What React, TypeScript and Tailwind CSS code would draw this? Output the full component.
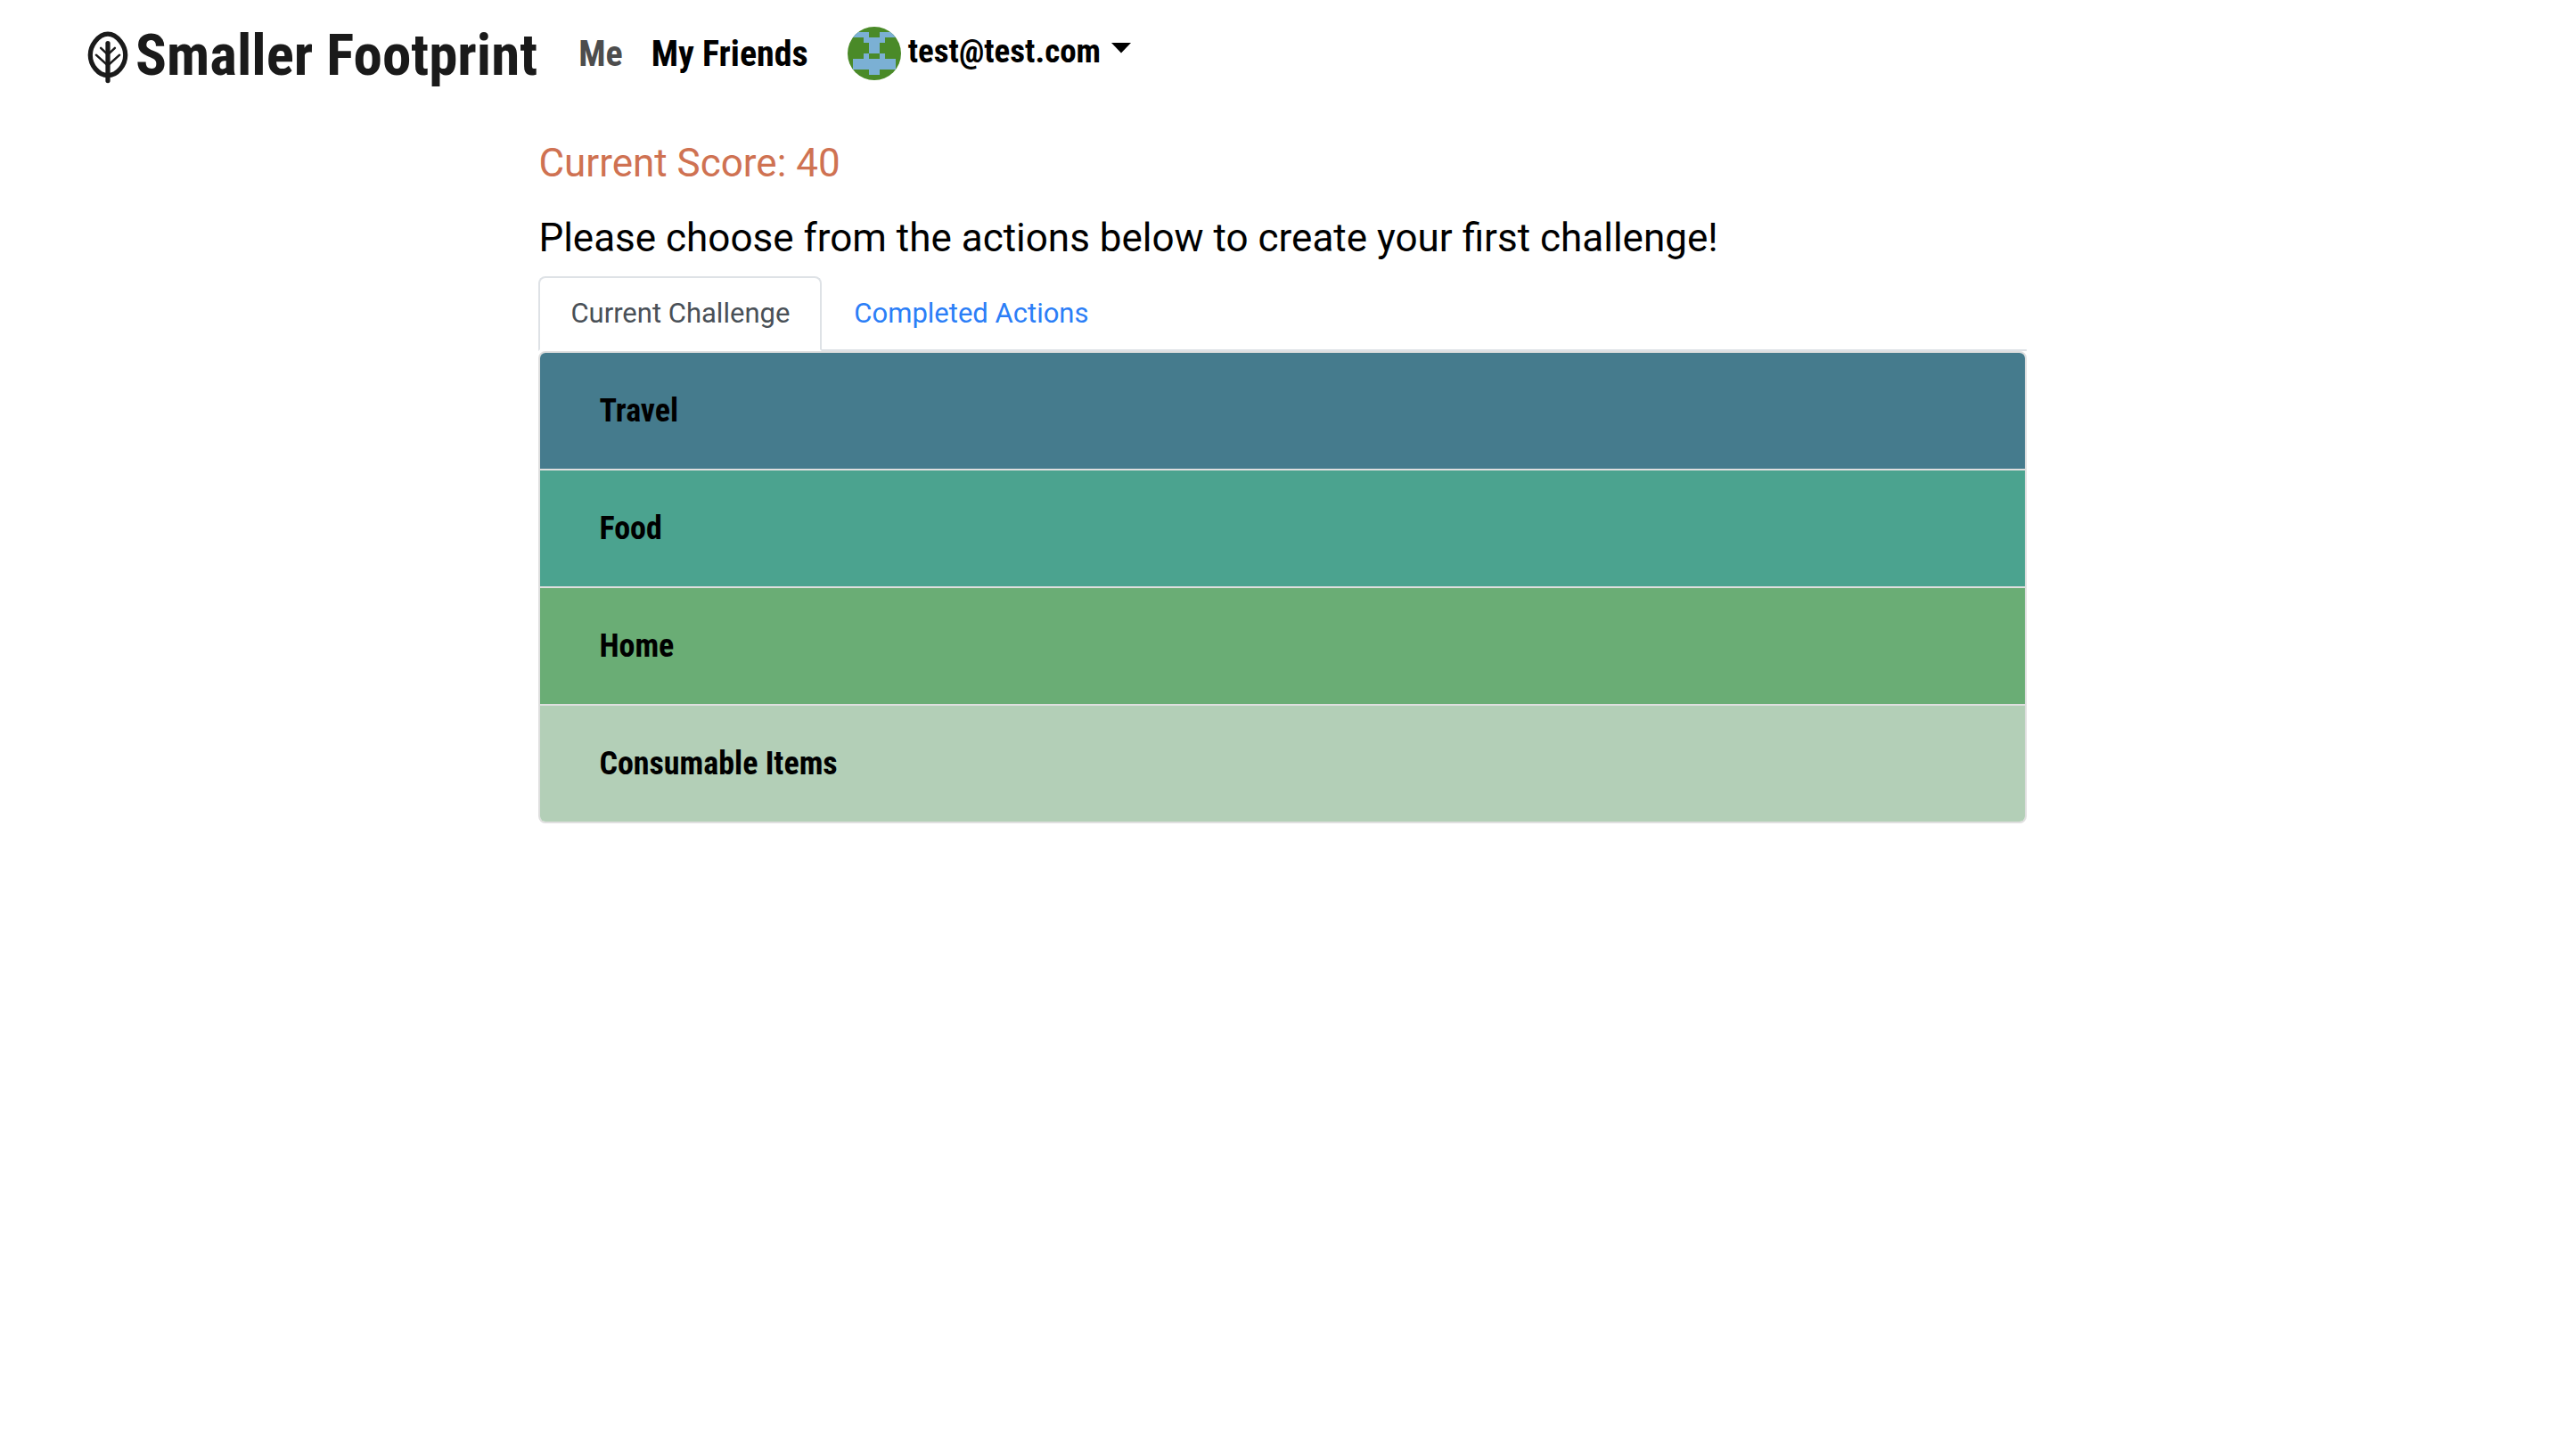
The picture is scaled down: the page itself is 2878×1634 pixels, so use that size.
const AVATAR_ROWS = [
  "..........",
  "####..####",
  "...####...",
  "....##....",
  "....##....",
  "...#..#...",
  ".########.",
  ".########.",
  "....##....",
  "..........",
];

const CATEGORIES = [
  { name: "Travel", color: "bg-[#457b8d]" },
  { name: "Food", color: "bg-[#4ba38f]" },
  { name: "Home", color: "bg-[#6aad75]" },
  { name: "Consumable Items", color: "bg-[#b3cfb7]" },
];

function LeafIcon() {
  return (
    <svg viewBox="52 46 140 182" className="h-[60px] w-[46px]" fill="none" stroke="currentColor" strokeLinecap="round" aria-hidden="true">
      <path strokeWidth="16" d="M122 58C138 58 154 69 165 83C176 97 182 113 182 130C182 165 154 200 122 200C90 200 62 165 62 130C62 113 68 97 79 83C90 69 106 58 122 58Z" />
      <path strokeWidth="16" d="M122 90V218" />
      <path strokeWidth="7.5" d="M98 106L122 129L146 106M82 130L122 166L162 130" />
    </svg>
  );
}

function Avatar() {
  return (
    <svg viewBox="0 0 10 10" className="size-[60px] rounded-full bg-[#4a8a28]" shapeRendering="crispEdges" aria-hidden="true">
      {AVATAR_ROWS.flatMap((row, y) =>
        [...row].map((cell, x) =>
          cell === "#" ? <rect key={`${x}-${y}`} x={x} y={y} width="1" height="1" fill="#7bb0d4" /> : null
        )
      )}
    </svg>
  );
}

export default function App() {
  return (
    <div className="min-h-screen bg-white font-['Roboto',sans-serif] text-black">
      <header className="flex h-[120px] items-center px-[98px] font-['Roboto_Condensed','Roboto',sans-serif] font-bold">
        <a href="#" className="flex items-center gap-2 pt-1 text-[65px] leading-[80px] text-[#1a1a1a]">
          <span className="pt-1">
            <LeafIcon />
          </span>
          Smaller Footprint
        </a>
        <nav className="ml-[30px] flex items-center text-[40px] leading-[60px]">
          <a href="#" className="px-4 pt-0.5 text-[#4d4d4d]">Me</a>
          <a href="#" className="px-4 pt-0.5">My Friends</a>
          <button type="button" className="ml-7 flex items-center gap-2">
            <Avatar />
            <span className="pb-1 text-[37px] leading-[54px]">test@test.com</span>
            <svg viewBox="0 0 22 12" className="mb-3 ml-1 h-3 w-[22px]" fill="currentColor" aria-hidden="true">
              <path d="M0 0H22L11 11.5Z" />
            </svg>
          </button>
        </nav>
      </header>

      <main className="mx-auto w-[58%] pt-9">
        <h2 className="text-[44px] leading-[54px] text-[#cf7252]">Current Score: 40</h2>
        <h1 className="mt-[30px] text-[44px] leading-[54px]">
          Please choose from the actions below to create your first challenge!
        </h1>

        <div role="tablist" className="mt-4 flex border-b-2 border-[#dee2e6] text-[31px] leading-[48px]">
          <button
            type="button"
            role="tab"
            aria-selected="true"
            className="-mb-0.5 rounded-t-lg border-2 border-[#dee2e6] border-b-white bg-white px-[34px] py-4 text-[#495057]"
          >
            Current Challenge
          </button>
          <button
            type="button"
            role="tab"
            aria-selected="false"
            className="-mb-0.5 rounded-t-lg border-2 border-transparent px-[34px] py-4 text-[#2b7ef7]"
          >
            Completed Actions
          </button>
        </div>

        <div className="divide-y-2 divide-[#dfdfdf] overflow-hidden rounded-lg border-2 border-[#dfdfdf] font-['Roboto_Condensed','Roboto',sans-serif]">
          {CATEGORIES.map(({ name, color }) => (
            <button
              key={name}
              type="button"
              className={`${color} block w-full px-[66px] py-[38px] text-left text-[36px] leading-[54px] font-bold`}
            >
              {name}
            </button>
          ))}
        </div>
      </main>
    </div>
  );
}
